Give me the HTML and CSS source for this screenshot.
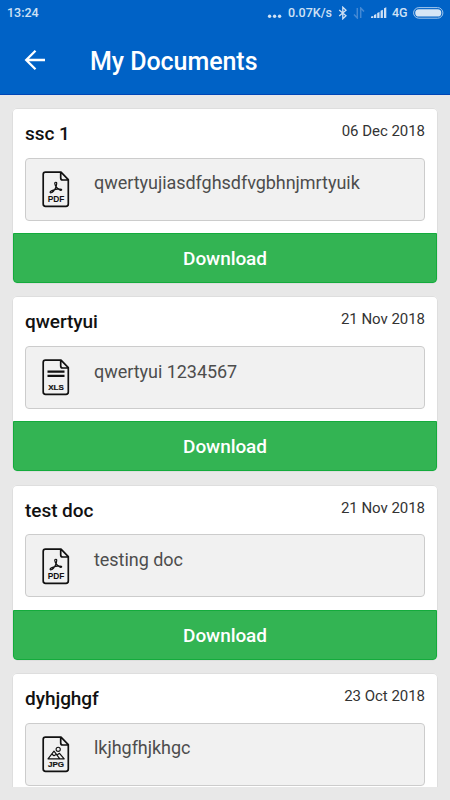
FILE: index.html
```html
<!DOCTYPE html>
<html lang="en">
<head>
<meta charset="utf-8">
<title>My Documents</title>
<link rel="stylesheet" href="styles.css">
</head>
<body>
<svg class="symbols" aria-hidden="true">
  <symbol id="page" viewBox="0 0 28 37">
    <path d="M3.5 1.2H19L26.3 8.7V33a2.3 2.3 0 0 1-2.3 2.3H3.5A2.3 2.3 0 0 1 1.2 33V3.5A2.3 2.3 0 0 1 3.5 1.2ZM18.7 1.5V7a2 2 0 0 0 2 2H26" fill="none" stroke="#111" stroke-width="1.7" stroke-linejoin="round"/>
  </symbol>
  <symbol id="pdf" viewBox="0 0 28 37">
    <path d="M12.8 12.6c-.4-1.7 2.2-1.9 1.9-.1-.2 1.2-.3 2-.5 3-.7 1.9-1.6 3.3-2.6 4.5-1.6 2-3.7 2.3-3.5 1.2.2-1.1 3-2.2 5.7-2.8 3.5-.7 6.2-.5 5.8.5-.6 1.3-3.5-.6-5.4-2.9-.8-1-1.1-2-1.4-3.4Z" fill="none" stroke="#111" stroke-width="1.2"/>
  </symbol>
</svg>
<header class="app-header">
  <div class="status">
    <span class="clock">13:24</span>
    <div class="status-right">
      <svg class="dots" width="16" height="12" viewBox="0 0 16 12" fill="#cfe1f5"><circle cx="2.6" cy="8.2" r="1.7"/><circle cx="7.6" cy="8.2" r="1.7"/><circle cx="12.6" cy="8.2" r="1.7"/></svg>
      <span class="speed">0.07K/s</span>
      <svg class="bluetooth" width="10" height="14" viewBox="0 0 10 14" fill="none" stroke="#cfe1f5" stroke-width="1.3"><path d="M1.2 4 8 9.8 4.8 12.8V1.2L8 4.2 1.2 10"/></svg>
      <svg class="data" width="12" height="12" viewBox="0 0 12 12" fill="none" stroke="#4489d4" stroke-width="1.5"><path d="M4.3 1v10L1 7.4M7.7 11V1L11 4.6"/></svg>
      <svg class="signal" width="16" height="12" viewBox="0 0 16 12" fill="#cfe1f5"><path d="M0 11V9.6l2.3-.6v2zM3 11V8l2.3-1v4zM6.2 11V6l2.3-1v6zM9.6 11V3.7l2.3-1V11zM13 11V1.2l2.3-1V11z"/></svg>
      <span class="network">4G</span>
      <svg class="battery" width="31" height="12" viewBox="0 0 31 12"><rect x=".6" y=".6" width="29.3" height="10.6" rx="5.3" fill="none" stroke="#a5c8ec"/><rect x="2.2" y="2.2" width="26.1" height="7.4" rx="3.7" fill="#d7e6f5"/></svg>
    </div>
  </div>
  <div class="toolbar">
    <svg class="back" width="22" height="22" viewBox="0 0 22 22" fill="none" stroke="#fff" stroke-width="2.3"><path d="M21 11H2.6M11.5 1.7 2.2 11l9.3 9.3"/></svg>
    <h1>My Documents</h1>
  </div>
</header>
<main class="documents">
  <article class="card">
    <div class="card-head"><h2>ssc 1</h2><time>06 Dec 2018</time></div>
    <div class="file">
      <svg class="file-icon" viewBox="0 0 28 37"><use href="#page"/><use href="#pdf"/><text class="type" x="14" y="31.3">PDF</text></svg>
      <span>qwertyujiasdfghsdfvgbhnjmrtyuik</span>
    </div>
    <button>Download</button>
  </article>
  <article class="card">
    <div class="card-head"><h2>qwertyui</h2><time>21 Nov 2018</time></div>
    <div class="file">
      <svg class="file-icon" viewBox="0 0 28 37"><use href="#page"/><path d="M5.5 12.6h17M5.5 16.9h17" stroke="#111" stroke-width="2.2"/><text class="type heavy" x="14" y="31">XLS</text></svg>
      <span>qwertyui 1234567</span>
    </div>
    <button>Download</button>
  </article>
  <article class="card">
    <div class="card-head"><h2>test doc</h2><time>21 Nov 2018</time></div>
    <div class="file">
      <svg class="file-icon" viewBox="0 0 28 37"><use href="#page"/><use href="#pdf"/><text class="type" x="14" y="31.3">PDF</text></svg>
      <span>testing doc</span>
    </div>
    <button>Download</button>
  </article>
  <article class="card">
    <div class="card-head"><h2>dyhjghgf</h2><time>23 Oct 2018</time></div>
    <div class="file">
      <svg class="file-icon" viewBox="0 0 28 37"><use href="#page"/><path d="M6 22.8 12 15.2l5.8 7.6ZM15 19l2.5-1.7 4.7 5.5h-4.4M10 18.2l2 1.5 2-1.2" fill="none" stroke="#111" stroke-width="1.2" stroke-linejoin="round"/><circle cx="16.2" cy="13.3" r="2.1" fill="none" stroke="#111" stroke-width="1.1"/><text class="type heavy" x="14" y="31.3">JPG</text></svg>
      <span>lkjhgfhjkhgc</span>
    </div>
  </article>
</main>
</body>
</html>
```
FILE: styles.css
```css
* { box-sizing: border-box; }
body { margin: 0; width: 450px; height: 800px; overflow: hidden; background: #e8e8e8; font-family: Roboto, sans-serif; color: #111; }
.symbols { position: absolute; width: 0; height: 0; }
.app-header { height: 95px; background: #0062c6; border-bottom: 1px solid #0046b6; color: #fff; }
.status { height: 26px; display: flex; justify-content: space-between; padding: 0 6px 0 7px; color: #cfe1f5; font-size: 12.5px; font-weight: 500; line-height: 26px; }
.status-right { display: flex; align-items: center; }
.dots { margin: 1px 5px 0 0; }
.speed { width: 44px; }
.bluetooth { margin-left: 6px; }
.data { margin-left: 5px; }
.signal { margin-left: 6px; }
.network { width: 16px; margin-left: 5px; }
.battery { margin-left: 5px; }
.toolbar { height: 68px; display: flex; align-items: center; padding-left: 24px; }
.back { flex: none; }
h1 { margin: 3px 0 0 44px; font-size: 25px; line-height: 30px; font-weight: 500; letter-spacing: -.05px; white-space: nowrap; }
.documents { height: 692px; overflow: hidden; padding: 13px 12px 0; display: flex; flex-direction: column; gap: 12.3px; }
.card { flex: none; height: 176px; padding: 0 1px .8px; background: #fff; border-radius: 5px; overflow: hidden; box-shadow: inset 0 0 0 1px #dedede; }
.card-head { height: 49.7px; display: flex; justify-content: space-between; padding: 0 12px; }
h2 { margin: 14px 0 0; font-size: 19px; line-height: 24px; font-weight: 500; letter-spacing: -.05px; color: #111; }
time { margin-top: 13px; font-size: 15px; line-height: 20px; letter-spacing: -.03px; color: #333; }
.file { height: 63px; margin: 0 12px 12.5px; display: flex; border: 1px solid #ccc; border-radius: 4px; background: #f1f1f1; }
.file-icon { flex: none; width: 28px; height: 37px; margin: 12.3px 0 0 16px; }
.file span { margin: 12.7px 0 0 24px; font-size: 18px; line-height: 24px; color: #4d4d4d; letter-spacing: -.04px; }
.type { font-family: "Liberation Sans", sans-serif; font-size: 8.4px; font-weight: 700; text-anchor: middle; fill: #111; }
.heavy { stroke: #111; stroke-width: .2px; font-size: 8px; }
button { display: block; width: 100%; height: 50px; padding: 2px 0 0; border: 1px solid #14ab3c; border-radius: 0 0 4px 4px; background: #33b453; color: #fff; font: 500 19px/24px Roboto, sans-serif; letter-spacing: -.08px; }
```
